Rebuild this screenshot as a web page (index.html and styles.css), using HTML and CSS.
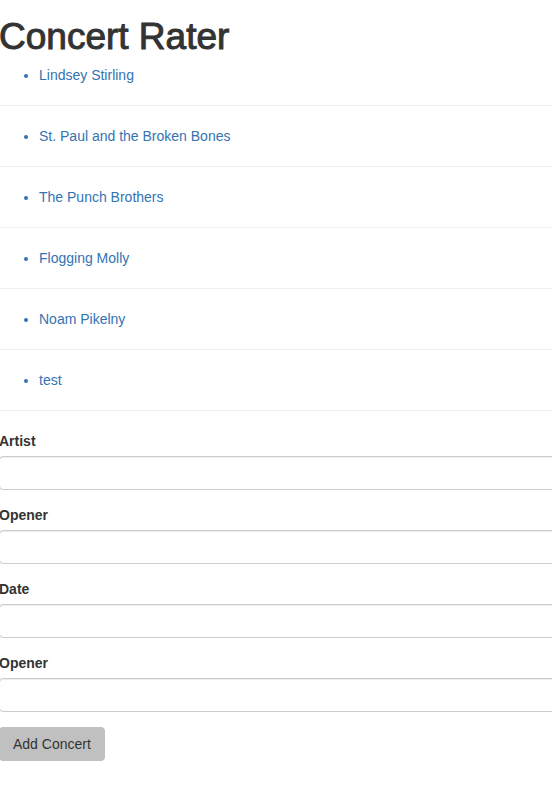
FILE: index.html
```html
<!DOCTYPE html>
<html lang="en">
<head>
<meta charset="utf-8">
<meta name="viewport" content="width=device-width, initial-scale=1">
<title>Concert Rater</title>
<link rel="stylesheet" href="styles.css">
</head>
<body>
<main>
<h1>Concert Rater</h1>
<section class="concerts">
<a class="concert" href="#"><ul><li>Lindsey Stirling</li></ul></a>
<hr>
<a class="concert" href="#"><ul><li>St. Paul and the Broken Bones</li></ul></a>
<hr>
<a class="concert" href="#"><ul><li>The Punch Brothers</li></ul></a>
<hr>
<a class="concert" href="#"><ul><li>Flogging Molly</li></ul></a>
<hr>
<a class="concert" href="#"><ul><li>Noam Pikelny</li></ul></a>
<hr>
<a class="concert" href="#"><ul><li>test</li></ul></a>
<hr>
</section>
<form>
<div class="form-group"><label for="artist">Artist</label><input class="form-control" id="artist" type="text"></div>
<div class="form-group"><label for="opener">Opener</label><input class="form-control" id="opener" type="text"></div>
<div class="form-group"><label for="date">Date</label><input class="form-control" id="date" type="text"></div>
<div class="form-group"><label for="opener-2">Opener</label><input class="form-control" id="opener-2" type="text"></div>
<button class="btn" type="button">Add Concert</button>
</form>
</main>
</body>
</html>
```
FILE: styles.css
```css
* {
  box-sizing: border-box;
}

body {
  margin: 0;
  overflow-x: hidden;
  background: #fff;
  color: #333;
  font-family: "Helvetica Neue", Helvetica, "Liberation Sans", Arial, sans-serif;
  font-size: 14px;
  line-height: 20px;
}

/* The page runs slightly past both window edges. */
main {
  margin: 0 -8px 0 -1px;
}

/* The stroke gives a medium weight where the font has only regular and bold. */
h1 {
  margin: 17px 0 8px;
  font-size: 37px;
  font-weight: 500;
  line-height: 40px;
  -webkit-text-stroke: 1px #333;
}

.concert {
  display: block;
  color: #3373b2;
  text-decoration: none;
}

.concert ul {
  margin: 0;
  padding-left: 40px;
}

hr {
  margin: 20px 0;
  border: 0;
  border-top: 1px solid #eee;
}

.form-group {
  margin-bottom: 15px;
}

label {
  display: block;
  margin-bottom: 5px;
  font-weight: 700;
}

.form-control {
  display: block;
  width: 100%;
  height: 34px;
  padding: 6px 12px;
  border: 1px solid #ccc;
  border-radius: 4px;
  background: #fff;
  box-shadow: inset 0 1px 1px rgba(0, 0, 0, 0.075);
  color: #555;
  font: inherit;
}

.btn {
  padding: 6px 13px;
  border: 1px solid #c0c0c0;
  border-radius: 4px;
  background: #c0c0c0;
  color: #333;
  font: inherit;
}
```
